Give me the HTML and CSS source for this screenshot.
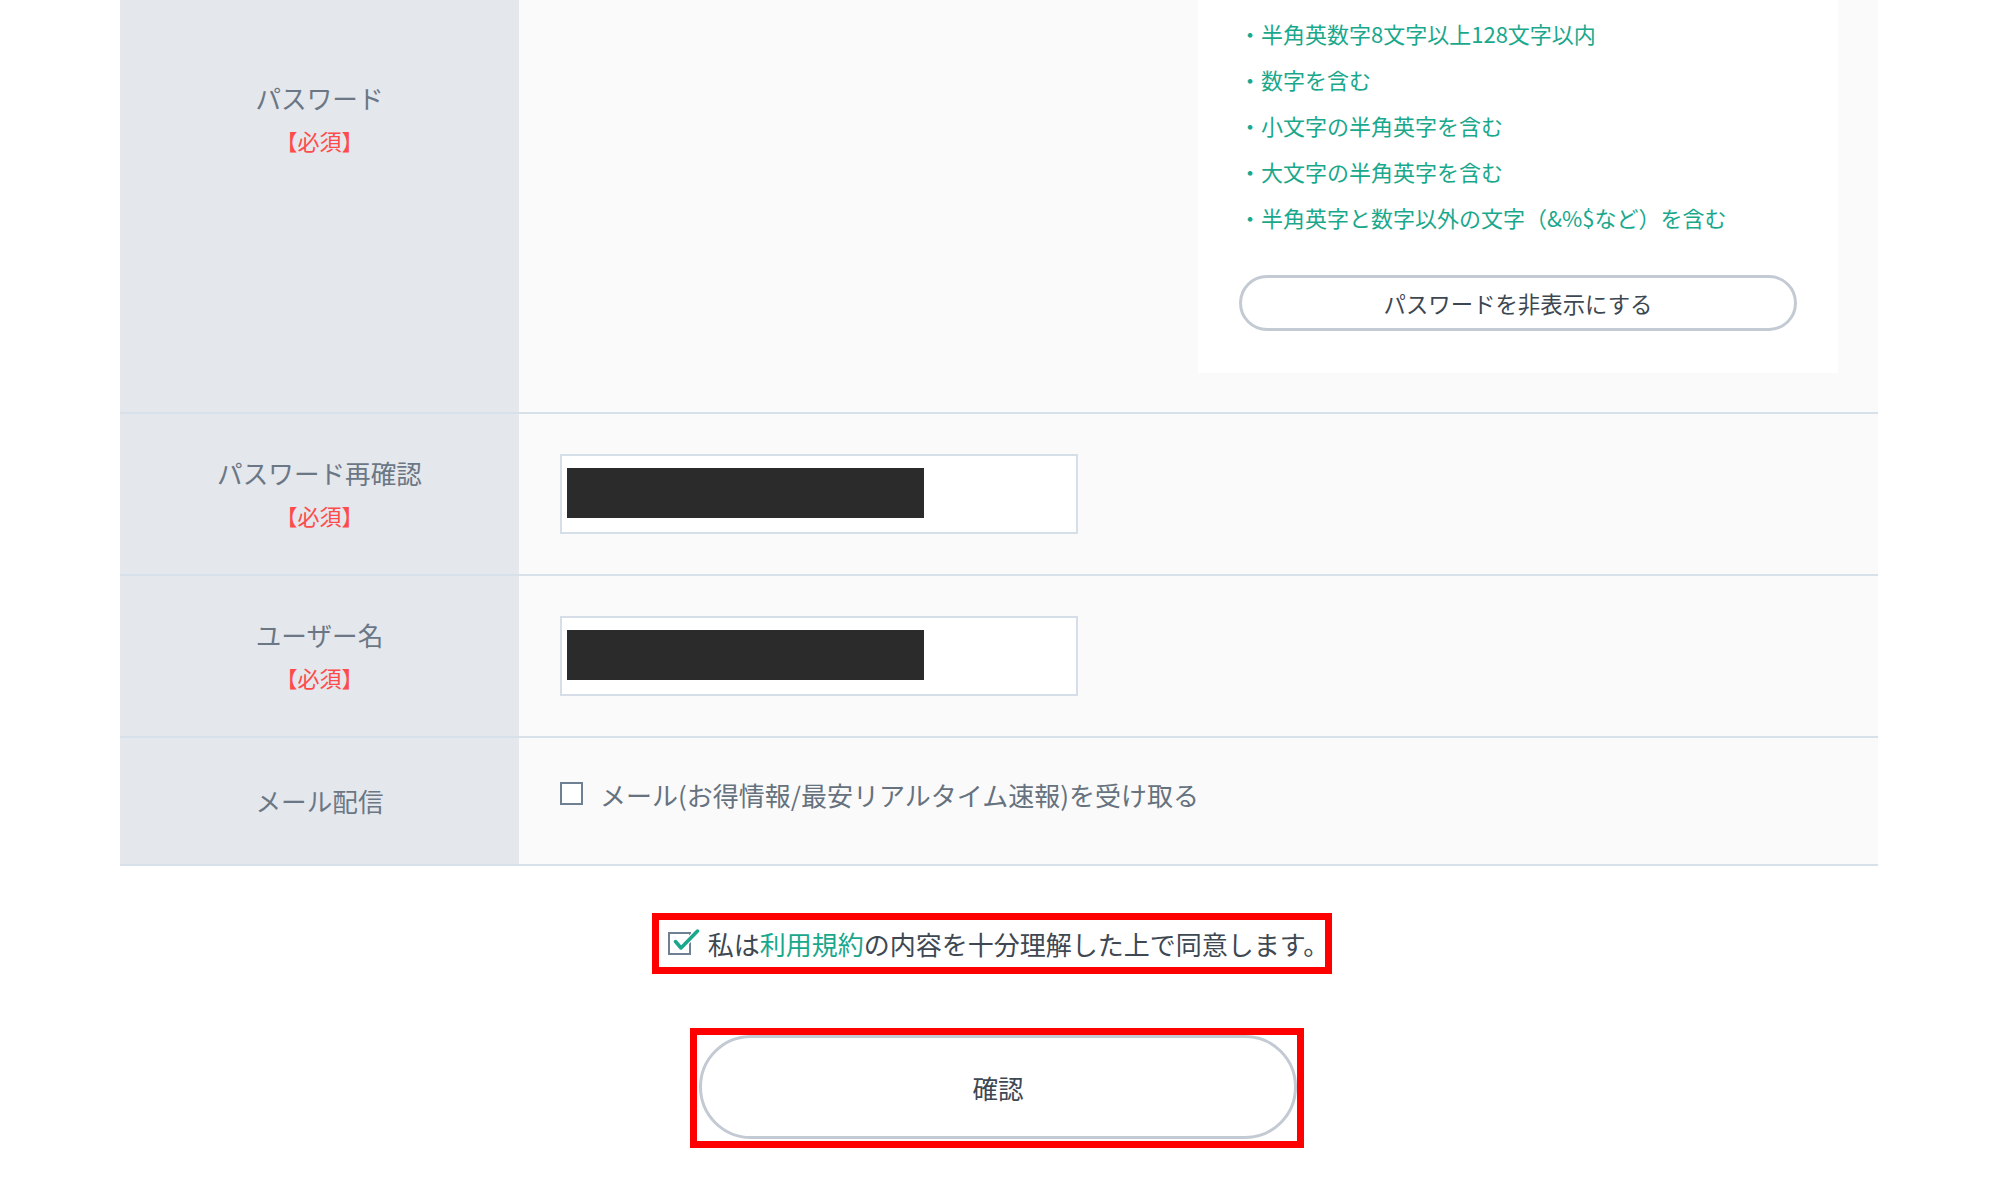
FILE: index.html
```
<!DOCTYPE html>
<html lang="ja">
<head>
<meta charset="utf-8"/>
<meta content="width=device-width, initial-scale=1.0" name="viewport"/>
<title>会員登録</title>
<link rel="stylesheet" href="styles.css">
</head>
<body>
<div class="page">
  <div class="form-table">
    <!-- パスワード -->
    <div class="row row-password">
      <div class="row-label">
        <span class="label-name">パスワード</span>
        <span class="label-req">【必須】</span>
      </div>
      <div class="row-body">
        <div class="field"><div class="mask"></div></div>
        <div class="rule-box">
          <ul class="rule-list">
            <li>・半角英数字8文字以上128文字以内</li>
            <li>・数字を含む</li>
            <li>・小文字の半角英字を含む</li>
            <li>・大文字の半角英字を含む</li>
            <li>・半角英字と数字以外の文字（&amp;%$など）を含む</li>
          </ul>
          <button class="btn-toggle" type="button">パスワードを非表示にする</button>
        </div>
      </div>
    </div>
    <!-- パスワード再確認 -->
    <div class="row">
      <div class="row-label">
        <span class="label-name">パスワード再確認</span>
        <span class="label-req">【必須】</span>
      </div>
      <div class="row-body">
        <div class="field"><div class="mask"></div></div>
      </div>
    </div>
    <!-- ユーザー名 -->
    <div class="row">
      <div class="row-label">
        <span class="label-name">ユーザー名</span>
        <span class="label-req">【必須】</span>
      </div>
      <div class="row-body">
        <div class="field"><div class="mask"></div></div>
      </div>
    </div>
    <!-- メール配信 -->
    <div class="row">
      <div class="row-label">
        <span class="label-name">メール配信</span>
      </div>
      <div class="row-body row-body-mail">
        <label class="mail-opt"><span class="box"></span>メール(お得情報/最安リアルタイム速報)を受け取る</label>
      </div>
    </div>
  </div>

  <div class="agree-wrap">
    <div class="agree mark">
      <svg class="check-icon" width="32" height="28" viewBox="0 0 32 28">
        <rect x="1" y="4" width="21" height="21" fill="#fff" stroke="#6f8093" stroke-width="2"/>
        <path d="M7.5 12.5 L13 19 L29.5 2" fill="none" stroke="#fff" stroke-width="6" stroke-linecap="round" stroke-linejoin="round"/>
        <path d="M7.5 12.5 L13 19 L29.5 2" fill="none" stroke="#1aa88c" stroke-width="3.5" stroke-linecap="round" stroke-linejoin="round"/>
      </svg>
      <span class="agree-text">私は<a class="terms" href="#">利用規約</a>の内容を十分理解した上で同意します。</span>
    </div>
  </div>

  <div class="submit-wrap">
    <div class="mark mark-submit">
      <button class="btn-submit" type="button">確認</button>
    </div>
  </div>
</div>
</body>
</html>
```

FILE: styles.css
```
body {
  margin: 0;
  background: #fff;
  font-family: "Noto Sans CJK JP", "Noto Sans", sans-serif;
  color: #3d4752;
}
.page {
  margin-top: -167px;
  padding-bottom: 60px;
}
.form-table {
  width: 1758px;
  margin-left: 120px;
}
.row {
  display: flex;
  border-bottom: 2px solid #d8e0e9;
}
.row-label {
  width: 399px;
  flex-shrink: 0;
  background: #e4e7ec;
  display: flex;
  flex-direction: column;
  align-items: center;
  justify-content: center;
  text-align: center;
}
.row-password .row-label {
  padding-bottom: 7px;
}
.label-name {
  font-size: 25.6px;
  line-height: 42px;
  color: #6b7785;
}
.label-req {
  font-size: 22px;
  line-height: 42px;
  color: #ff4b4b;
}
.row-body {
  flex: 1;
  background: #fafafa;
  padding: 40px 40px 40px 41px;
  display: flex;
  align-items: flex-start;
  justify-content: space-between;
}
.row-password .row-body {
  padding-bottom: 39px;
}
.field {
  width: 518px;
  height: 80px;
  box-sizing: border-box;
  border: 2px solid #d6dee7;
  background: #fff;
  padding: 12px 5px;
}
.mask {
  width: 357px;
  height: 50px;
  background: #2b2b2b;
}
.rule-box {
  width: 640px;
  box-sizing: border-box;
  background: #fff;
  padding: 137px 41px 42px 41px;
}
.rule-list {
  list-style: none;
  margin: 0;
  padding: 0;
}
.rule-list li {
  font-size: 22px;
  line-height: 46px;
  color: #1aa88c;
}
.btn-toggle {
  display: block;
  width: 100%;
  height: 56px;
  margin-top: 35px;
  border: 3px solid #c3cad3;
  border-radius: 30px;
  background: #fff;
  font-family: inherit;
  font-size: 22.4px;
  color: #3d4752;
  cursor: pointer;
}
.row-body-mail {
  align-items: center;
  justify-content: flex-start;
  padding-top: 34px;
  padding-bottom: 46px;
}
.mail-opt {
  display: flex;
  align-items: center;
  font-size: 26px;
  line-height: 46px;
  color: #66727e;
}
.mail-opt .box {
  width: 23px;
  height: 23px;
  box-sizing: border-box;
  border: 2px solid #6f8093;
  background: #fff;
  margin-right: 17px;
  margin-top: -3px;
}

/* 赤枠は説明用の注釈 */
.mark {
  border: 7px solid #ff0000;
}
.agree-wrap {
  display: flex;
  justify-content: center;
  margin-top: 47px;
  padding-right: 14px;
}
.agree {
  display: flex;
  align-items: center;
  height: 47px;
  padding: 0 0 0 9px;
  font-size: 26px;
  color: #3e4852;
}
.agree-text {
  margin-right: -4px;
}
.check-icon {
  margin-right: 8px;
  margin-top: -2px;
}
.terms {
  color: #1aa88c;
  text-decoration: none;
}
.submit-wrap {
  display: flex;
  justify-content: center;
  margin-top: 54px;
  padding-right: 4px;
}
.mark-submit {
  padding: 0 0 2px 2px;
}
.btn-submit {
  display: block;
  width: 598px;
  height: 104px;
  border: 3px solid #c3cad3;
  border-radius: 52px;
  background: #fff;
  font-family: inherit;
  font-size: 25.6px;
  color: #3e4852;
  cursor: pointer;
}
```
